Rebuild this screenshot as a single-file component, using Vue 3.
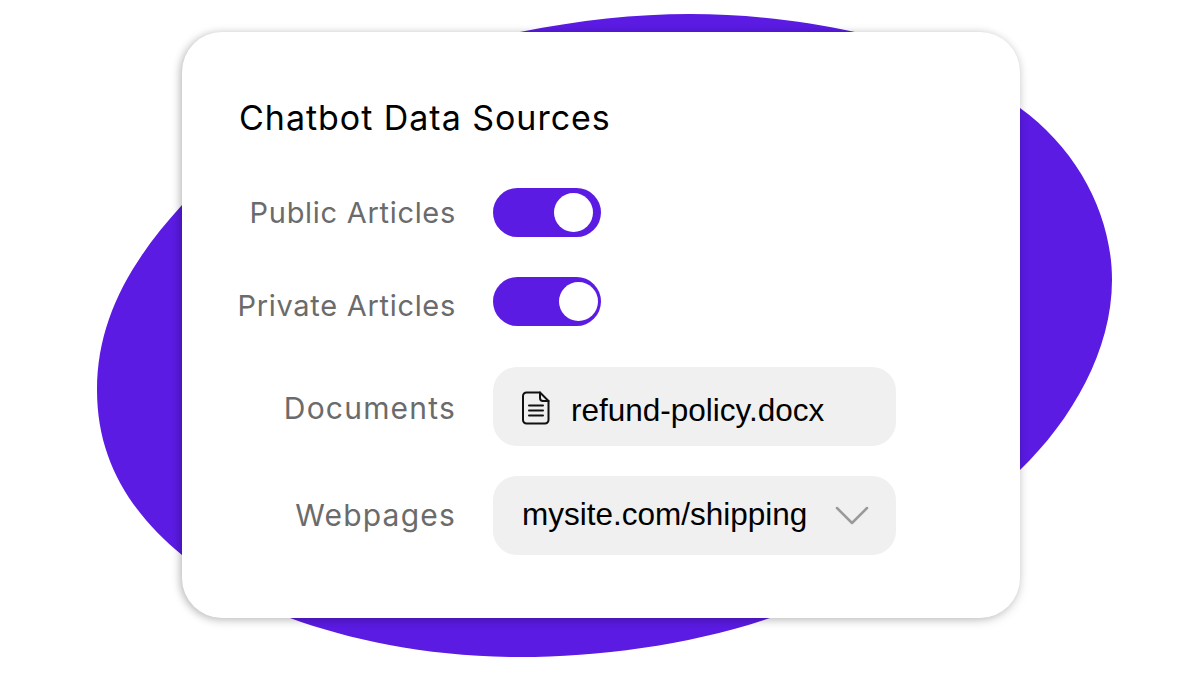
<script setup>
const toggles = [
  { label: 'Public Articles', knob: 'knob-a' },
  { label: 'Private Articles', knob: 'knob-b' }
]
</script>

<template>
  <div class="stage">
    <svg class="blob" width="1200" height="675" viewBox="0 0 1200 675" aria-hidden="true">
      <path d="M690 14C748 14 805 21 855 32L1020 108C1078 150 1112 215 1112 280C1112 350 1072 420 1020 470C950 538 860 590 770 618C690 645 600 657 520 657C430 657 350 640 290 618C250 604 215 582 182 555C130 512 97 460 97 390C97 320 130 262 182 205C260 125 400 58 520 32C580 20 635 14 690 14Z" fill="#5b1be3" />
    </svg>
    <main class="card">
      <h1 class="title">Chatbot Data Sources</h1>
      <div v-for="t in toggles" :key="t.label" class="row toggle-row" :class="t.knob">
        <span class="label">{{ t.label }}</span>
        <span class="toggle"><span class="knob"></span></span>
      </div>
      <div class="row field-row doc-row">
        <span class="label">Documents</span>
        <div class="field">
          <svg class="doc" width="28" height="34" viewBox="0 0 28 34" fill="none" stroke="#111" stroke-width="2" stroke-linecap="round" stroke-linejoin="round">
            <path d="M4.500 1.500H18L26.500 10V29A3.500 3.500 0 0 1 23 32.500H4.500A3.500 3.500 0 0 1 1 29V5A3.500 3.500 0 0 1 4.500 1.500Z" />
            <path d="M18 1.500V7A3 3 0 0 0 21 10H26.500" />
            <path d="M7 14.500H21M7 19.500H21M7 24.500H21" />
          </svg>
          <span class="value">refund-policy.docx</span>
        </div>
      </div>
      <div class="row field-row web-row">
        <span class="label">Webpages</span>
        <div class="field between">
          <span class="value">mysite.com/shipping</span>
          <svg class="chev" width="34" height="20" viewBox="0 0 34 20" fill="none" stroke="#9a9a9a" stroke-width="2.500" stroke-linecap="round" stroke-linejoin="round">
            <path d="M2 2L17 17L32 2" />
          </svg>
        </div>
      </div>
    </main>
  </div>
</template>

<style>
html, body { margin: 0; background: #fff; }
</style>

<style scoped>
.stage {
  position: relative;
  width: 1200px;
  height: 675px;
  overflow: hidden;
  padding: 32px 0 0 182px;
  box-sizing: border-box;
}
.blob { position: absolute; left: 0; top: 0; }
.card {
  position: relative;
  box-sizing: border-box;
  width: 838px;
  height: 586px;
  background: #fff;
  border-radius: 40px;
  box-shadow: -2px 1px 8px rgba(0, 0, 0, .25), 2px 4px 12px rgba(0, 0, 0, .06);
  font-family: Inter, "Noto Sans", sans-serif;
}
.title {
  margin: 0;
  padding: 66px 0 0 57px;
  height: 40px;
  font-size: 34px;
  line-height: 40px;
  font-weight: 400;
  color: #000;
  letter-spacing: .97px;
  box-sizing: content-box;
}
.row {
  display: grid;
  grid-template-columns: 273px 403px;
  column-gap: 38px;
  align-items: center;
}
.toggle-row { height: 49px; margin-top: 40px; }
.knob-a { margin-top: 50px; }
.doc-row { height: 79px; margin-top: 41px; }
.web-row { height: 79px; margin-top: 30px; }
.label {
  text-align: right;
  font-size: 29px;
  letter-spacing: .7px;
  margin-right: -1px;
  color: #6b6b6b;
}
.field-row .label { font-size: 30px; letter-spacing: 1.2px; }
.knob-b .label { margin-top: 7px; }
.doc-row .label { margin-top: 2px; }
.web-row .label { margin-bottom: 2px; }
.toggle {
  position: relative;
  display: block;
  width: 108px;
  height: 49px;
  border-radius: 25px;
  background: #5b1be3;
}
.knob {
  position: absolute;
  top: 5px;
  width: 39px;
  height: 39px;
  border-radius: 50%;
  background: #fff;
}
.knob-a .knob { left: 61px; }
.knob-b .knob { left: 66px; }
.field {
  display: flex;
  align-items: center;
  height: 79px;
  padding: 0 27px 0 29px;
  box-sizing: border-box;
  background: #f0f0f0;
  border-radius: 24px;
}
.between { justify-content: space-between; }
.doc { margin: 2px 21px 0 0; flex: none; }
.value {
  font-family: "Liberation Sans", Arial, sans-serif;
  font-size: 31.500px;
  color: #000;
}
.doc-row .value { margin-top: 8px; }
.web-row .value { margin-bottom: 2px; }
</style>
